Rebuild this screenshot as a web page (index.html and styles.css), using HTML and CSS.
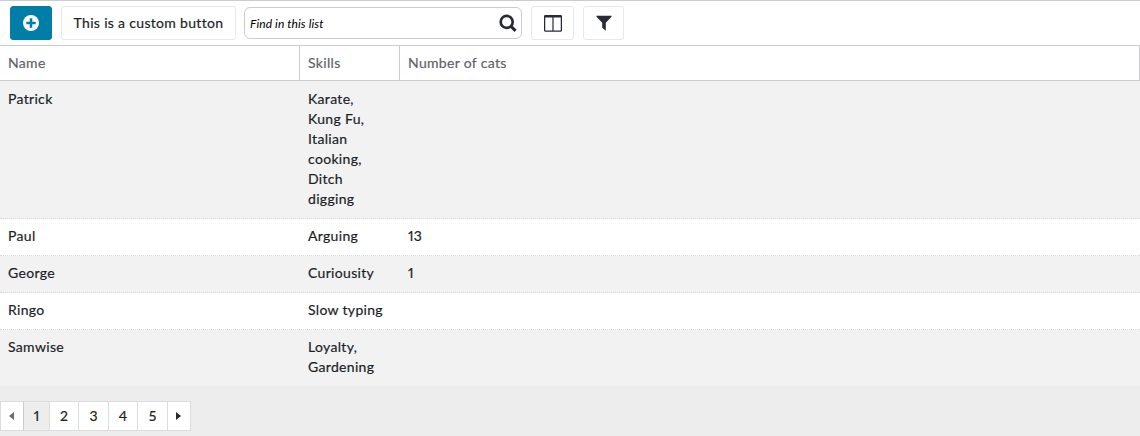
FILE: index.html
```html
<!DOCTYPE html>
<html lang="en">
<head>
<meta charset="utf-8">
<title>List</title>
<link rel="stylesheet" href="styles.css">
</head>
<body>
<div class="toolbar">
  <button class="btn btn-primary" aria-label="Add">
    <svg width="16" height="16" viewBox="0 0 16 16"><circle cx="8" cy="8" r="8" fill="#fff"/><path d="M8 3.3v9.4M3.3 8h9.4" stroke="#007ea8" stroke-width="2.5"/></svg>
  </button>
  <button class="btn btn-custom"><span>This is a custom button</span></button>
  <div class="search">
    <span class="search-text">Find in this list</span>
    <svg width="18" height="18" viewBox="0 0 18 18" fill="none" stroke="#272b36"><circle cx="7.7" cy="7.9" r="6" stroke-width="2.7"/><path d="M12 12.4l4.6 4.5" stroke-width="3"/></svg>
  </div>
  <button class="btn btn-columns" aria-label="Columns">
    <svg width="18" height="17" viewBox="0 0 18 17"><rect x=".6" y=".8" width="16.8" height="15.4" rx="1" fill="#fff" stroke="#272b36" stroke-width="1.3"/><path d="M0 1.5Q0 0 1.5 0h15Q18 0 18 1.5V2.5H0z" fill="#272b36"/><path d="M9 2v14" stroke="#272b36" stroke-width="1.2"/></svg>
  </button>
  <button class="btn btn-filter" aria-label="Filter">
    <svg width="16" height="16" viewBox="0 0 16 16"><path d="M.5.8h15v1L9.8 7.7V15.7L6.2 12.7V7.7L.5 1.8z" fill="#272b36"/></svg>
  </button>
</div>
<div class="grid-row header"><div>Name</div><div>Skills</div><div>Number of cats</div></div>
<div class="grid-row row first shaded"><div>Patrick</div><div>Karate,<br>Kung Fu,<br>Italian<br>cooking,<br>Ditch<br>digging</div><div></div></div>
<div class="grid-row row"><div>Paul</div><div>Arguing</div><div>13</div></div>
<div class="grid-row row shaded"><div>George</div><div>Curiousity</div><div>1</div></div>
<div class="grid-row row"><div>Ringo</div><div>Slow typing</div><div></div></div>
<div class="grid-row row last shaded"><div>Samwise</div><div>Loyalty,<br>Gardening</div><div></div></div>
<div class="footer">
  <div class="pager">
    <span><svg width="5" height="8" viewBox="0 0 5 8"><path d="M5 0v8L0 4z" fill="#6b6e76"/></svg></span>
    <span class="current">1</span><span>2</span><span>3</span><span>4</span><span>5</span>
    <span><svg width="5" height="8" viewBox="0 0 5 8"><path d="M0 0v8l5-4z" fill="#272b36"/></svg></span>
  </div>
</div>
</body>
</html>
```
FILE: styles.css
```css
* { box-sizing: border-box; }
body {
  margin: 0;
  height: 436px;
  overflow: hidden;
  background: #ededed;
  color: #1c1f28;
  font: 400 14px/20px Lato, sans-serif;
  font-variant-numeric: proportional-nums;
  letter-spacing: .32px;
  -webkit-text-stroke: .2px;
}
svg { display: block; flex: none; }
.toolbar {
  display: flex;
  align-items: flex-start;
  height: 46px;
  padding: 5px 10px 0;
  background: #fff;
  border-top: 1px solid #cbcbd0;
  border-bottom: 1px solid #cbcbd0;
}
.btn {
  display: flex;
  align-items: center;
  justify-content: center;
  height: 34px;
  padding: 0;
  background: #fff;
  border: 1px solid #e6e8ea;
  border-radius: 3px;
  color: inherit;
  font: inherit;
  letter-spacing: inherit;
}
.btn-primary { width: 42px; background: #007ea8; border-color: #007ea8; }
.btn-custom { width: 175px; margin-left: 9px; white-space: nowrap; }
.btn-columns { width: 43px; margin-left: 9px; }
.btn-filter { width: 41px; margin-left: 9px; }
.search {
  display: flex;
  align-items: center;
  justify-content: space-between;
  width: 278px;
  height: 32px;
  margin: 1px 0 0 8px;
  padding: 0 4px 0 5px;
  border: 1px solid #cbcbd0;
  border-radius: 6px;
}
.search-text { padding-top: 1px; font-size: 12px; font-style: italic; letter-spacing: .1px; color: #000; -webkit-text-stroke: 0; }
.grid-row { display: grid; grid-template-columns: 300px 100px 1fr; background: #fff; }
.header { height: 35px; color: #5f6269; border-bottom: 1px solid #cbcbd0; }
.header div { padding: 7px 8px; border-right: 1px solid #cbcbd0; }
.row { border-bottom: 1px dotted #d8d8d8; }
.row div { padding: 7px 8px 9px; white-space: nowrap; }
.row.first div { padding: 8px; }
.shaded { background: #f2f2f2; }
.first { padding-bottom: 1px; }
.row.last { border-bottom: 0; }
.footer { padding-top: 15px; }
.pager {
  display: grid;
  grid-template-columns: 23px 26px 29px 30px 29px 30px 24px;
  width: 191px;
  height: 30px;
  background: #fff;
  border-top: 1px solid #dcdcdc;
  border-bottom: 1px solid #dcdcdc;
}
.pager span { display: flex; align-items: center; justify-content: center; border-left: 1px solid #dcdcdc; letter-spacing: 0; }
.pager span:last-child { padding-right: 1px; border-right: 1px solid #dcdcdc; }
.pager span:first-child { padding-right: 1px; }
.pager .current { background: #ededed; border-color: #cbcbcb; }
```
